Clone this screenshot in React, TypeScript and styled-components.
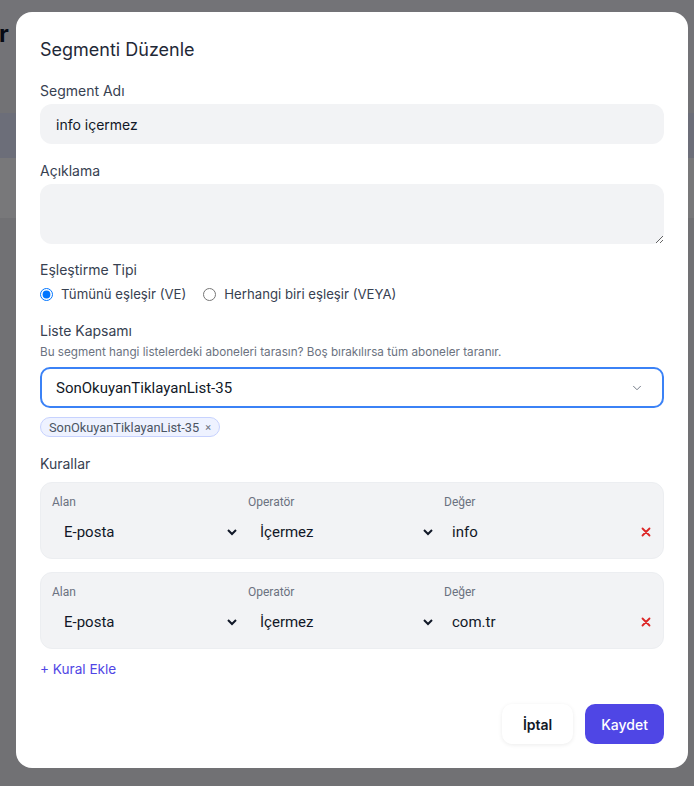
import styled, { createGlobalStyle } from 'styled-components';

const GlobalStyle = createGlobalStyle`
  html, body {
    margin: 0;
    padding: 0;
    background: #f3f4f6;
    font-family: Inter, "Noto Sans", sans-serif;
  }
  * {
    box-sizing: border-box;
  }
`;

const Page = styled.div`
  position: relative;
  width: 694px;
  height: 786px;
  overflow: hidden;
  background: #e2e3e8;
`;

const PageHeader = styled.div`
  height: 70px;
  display: flex;
  align-items: center;
  padding-bottom: 4px;
  margin-left: -127px;
  background: #e6e6ee;
`;

const PageTitle = styled.h1`
  margin: 0;
  font-size: 24px;
  font-weight: 700;
  color: #0f172a;
`;

const Band = styled.div<{ $h: number; $bg: string }>`
  height: ${(p) => p.$h}px;
  background: ${(p) => p.$bg};
`;

const Overlay = styled.div`
  position: absolute;
  inset: 0;
  background: rgba(0, 0, 0, 0.5);
  display: flex;
  align-items: flex-start;
  justify-content: flex-start;
  padding: 12px 0 0 16px;
`;

const Modal = styled.div`
  width: 672px;
  height: 756px;
  background: #ffffff;
  border-radius: 16px;
  padding: 24px;
  display: flex;
  flex-direction: column;
`;

const Title = styled.h2`
  margin: 0 0 17px;
  font-size: 18px;
  line-height: 28px;
  font-weight: 400;
  color: #1f2937;
`;

const Field = styled.div<{ $mb?: number }>`
  display: flex;
  flex-direction: column;
  margin-bottom: ${(p) => p.$mb ?? 17}px;
`;

const Label = styled.label<{ $mb?: number }>`
  font-size: 14px;
  line-height: 20px;
  color: #374151;
  margin-bottom: ${(p) => p.$mb ?? 3}px;
`;

const TextInput = styled.input`
  height: 40px;
  border: none;
  border-radius: 12px;
  background: #f2f3f5;
  padding: 0 16px;
  font-family: Inter, sans-serif;
  font-size: 14px;
  color: #111827;
  outline: none;
`;

const TextArea = styled.textarea`
  height: 60px;
  border: none;
  border-radius: 12px;
  background: #f2f3f5;
  padding: 10px 16px;
  font-family: Inter, sans-serif;
  font-size: 14px;
  outline: none;
`;

const RadioRow = styled.div`
  display: flex;
  align-items: center;
  height: 20px;
  gap: 17px;
`;

const RadioOption = styled.label`
  display: flex;
  align-items: center;
  gap: 8px;
  font-size: 13.2px;
  color: #374151;

  input {
    margin: 0;
    width: 13px;
    height: 13px;
  }
`;

const Helper = styled.div`
  font-size: 11.7px;
  line-height: 16px;
  color: #6b7280;
  margin-bottom: 7px;
`;

const ListSelect = styled.div`
  height: 41px;
  border: 2px solid #3b82f6;
  border-radius: 10px;
  display: flex;
  align-items: center;
  justify-content: space-between;
  padding: 0 18px 0 14px;
  font-family: Roboto, "Liberation Sans", sans-serif;
  font-size: 15px;
  color: #111827;
`;

const Tags = styled.div`
  display: flex;
  gap: 6px;
  margin-top: 9px;
`;

const Tag = styled.span`
  display: inline-flex;
  align-items: center;
  gap: 6px;
  height: 20px;
  padding: 0 8px;
  border-radius: 999px;
  background: #eef2ff;
  border: 1px solid #c7d2fe;
  font-family: Roboto, "Liberation Sans", sans-serif;
  font-size: 12.8px;
  color: #4b5563;

  b {
    font-weight: 400;
    font-size: 11px;
    color: #6b7280;
  }
`;

const RuleBox = styled.div`
  display: grid;
  grid-template-columns: repeat(3, minmax(0, 1fr)) 12px;
  column-gap: 8px;
  row-gap: 4px;
  padding: 11px 11px 8px;
  border: 1px solid #eceef1;
  border-radius: 12px;
  background: #f2f3f5;
  margin-bottom: 13px;
`;

const RuleLabel = styled.span`
  font-family: Roboto, "Liberation Sans", sans-serif;
  font-size: 12px;
  line-height: 16px;
  color: #6b7280;
`;

const RuleSelect = styled.select`
  width: 100%;
  min-width: 0;
  height: 36px;
  border: none;
  background: transparent;
  padding: 0 4px 0 8px;
  font-family: Roboto, "Liberation Sans", sans-serif;
  font-size: 15px;
  color: #111827;
  outline: none;
`;

const RuleInput = styled.input`
  width: 100%;
  min-width: 0;
  height: 36px;
  border: none;
  background: transparent;
  padding: 0 8px;
  font-family: Roboto, "Liberation Sans", sans-serif;
  font-size: 15px;
  color: #111827;
  outline: none;
`;

const RemoveBtn = styled.button`
  align-self: center;
  border: none;
  background: none;
  padding: 0;
  display: flex;
  align-items: center;
  justify-content: center;
`;

const AddRule = styled.button`
  align-self: flex-start;
  border: none;
  background: none;
  padding: 0;
  margin-top: -3px;
  font-family: Inter, sans-serif;
  font-size: 13.6px;
  line-height: 20px;
  color: #5046e5;
`;

const Footer = styled.div`
  display: flex;
  justify-content: flex-end;
  gap: 12px;
  margin-top: auto;
`;

const Button = styled.button<{ $primary?: boolean }>`
  height: 40px;
  padding: 0 ${(p) => (p.$primary ? 16 : 21)}px;
  border: none;
  border-radius: 10px;
  font-family: Inter, sans-serif;
  font-size: 14px;
  font-weight: ${(p) => (p.$primary ? 500 : 600)};
  background: ${(p) => (p.$primary ? '#4f46e5' : '#ffffff')};
  color: ${(p) => (p.$primary ? '#ffffff' : '#111827')};
  box-shadow: ${(p) => (p.$primary ? 'none' : '0 1px 4px rgba(0,0,0,0.08)')};
`;

const Chevron = () => (
  <svg width="14" height="14" viewBox="0 0 24 24" fill="none" stroke="#6b7280" strokeWidth="1.6" strokeLinecap="round" strokeLinejoin="round">
    <path d="m6 9 6 6 6-6" />
  </svg>
);

const Cross = () => (
  <svg width="10" height="10" viewBox="0 0 10 10" stroke="#dc2626" strokeWidth="1.8" strokeLinecap="round">
    <path d="M1.5 1.5 8.5 8.5M8.5 1.5 1.5 8.5" />
  </svg>
);

const rules = [
  { field: 'E-posta', op: 'İçermez', value: 'info' },
  { field: 'E-posta', op: 'İçermez', value: 'com.tr' },
];

export default function App() {
  return (
    <>
      <GlobalStyle />
      <Page>
        <PageHeader>
          <PageTitle>Segmentler</PageTitle>
        </PageHeader>
        <Band $h={43} $bg="#e4e4ea" />
        <Band $h={45} $bg="#d8dcf2" />
        <Band $h={60} $bg="#f0f0f4" />
        <Overlay>
          <Modal>
            <Title>Segmenti Düzenle</Title>
            <Field>
              <Label>Segment Adı</Label>
              <TextInput defaultValue="info içermez" />
            </Field>
            <Field $mb={16}>
              <Label>Açıklama</Label>
              <TextArea />
            </Field>
            <Field>
              <Label $mb={4}>Eşleştirme Tipi</Label>
              <RadioRow>
                <RadioOption>
                  <input type="radio" name="match" defaultChecked />
                  Tümünü eşleşir (VE)
                </RadioOption>
                <RadioOption>
                  <input type="radio" name="match" />
                  Herhangi biri eşleşir (VEYA)
                </RadioOption>
              </RadioRow>
            </Field>
            <Field>
              <Label>Liste Kapsamı</Label>
              <Helper>Bu segment hangi listelerdeki aboneleri tarasın? Boş bırakılırsa tüm aboneler taranır.</Helper>
              <ListSelect>
                <span>SonOkuyanTiklayanList-35</span>
                <Chevron />
              </ListSelect>
              <Tags>
                <Tag>
                  SonOkuyanTiklayanList-35 <b>×</b>
                </Tag>
              </Tags>
            </Field>
            <Field $mb={0}>
              <Label $mb={8}>Kurallar</Label>
              {rules.map((r, i) => (
                <RuleBox key={i}>
                  <RuleLabel>Alan</RuleLabel>
                  <RuleLabel>Operatör</RuleLabel>
                  <RuleLabel>Değer</RuleLabel>
                  <span />
                  <RuleSelect defaultValue={r.field}>
                    <option>E-posta</option>
                    <option>Ad</option>
                  </RuleSelect>
                  <RuleSelect defaultValue={r.op}>
                    <option>İçerir</option>
                    <option>İçermez</option>
                  </RuleSelect>
                  <RuleInput defaultValue={r.value} />
                  <RemoveBtn>
                    <Cross />
                  </RemoveBtn>
                </RuleBox>
              ))}
              <AddRule>+ Kural Ekle</AddRule>
            </Field>
            <Footer>
              <Button>İptal</Button>
              <Button $primary>Kaydet</Button>
            </Footer>
          </Modal>
        </Overlay>
      </Page>
    </>
  );
}
